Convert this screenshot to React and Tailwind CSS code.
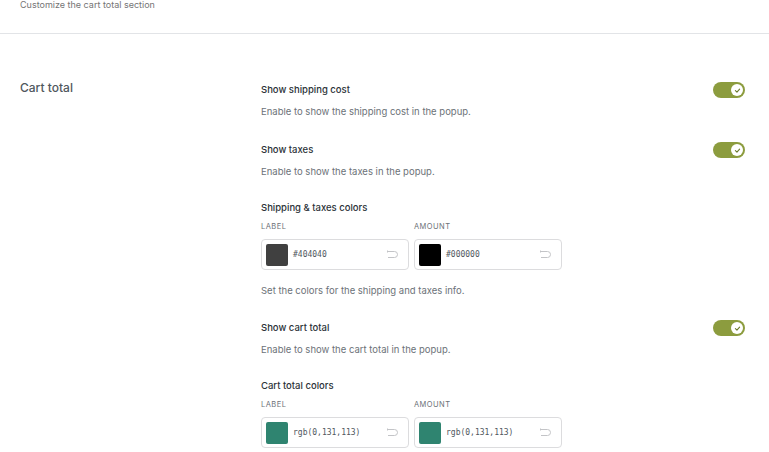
import React from "react";

function Toggle() {
  return (
    <div className="w-[32px] h-[16px] rounded-full bg-[#8c9c3e] flex items-center justify-end pr-[2px] shrink-0">
      <div className="w-[12px] h-[12px] rounded-full bg-white flex items-center justify-center">
        <svg width="7" height="7" viewBox="0 0 10 10" fill="none">
          <path d="M2 5.2 L4.2 7.2 L8 3" stroke="#6b7a2c" strokeWidth="1.6" strokeLinecap="round" strokeLinejoin="round" />
        </svg>
      </div>
    </div>
  );
}

function ColorInput({ color, value }) {
  return (
    <div className="w-[148px] h-[31px] border border-[#dcdcde] rounded-[4px] flex items-center pl-[4px] pr-[10px] bg-white">
      <div className="w-[22px] h-[22px] rounded-[2px] shrink-0" style={{ background: color }} />
      <span className="ml-[5px] text-[8px] text-[#50575e] font-['DejaVu_Sans_Mono',monospace] flex-1">{value}</span>
      <svg width="12" height="9" viewBox="0 0 12 9" fill="none">
        <path d="M1.5 1.5 H8.5 A2.5 2.5 0 0 1 8.5 7.5 H2" stroke="#c3c4c7" strokeWidth="1" />
        <path d="M1.5 0.5 V2.5" stroke="#c3c4c7" strokeWidth="1" />
      </svg>
    </div>
  );
}

function ToggleRow({ title, desc }) {
  return (
    <div className="flex justify-between items-start">
      <div>
        <div className="text-[9.5px] font-medium text-[#2c3338] leading-[14px]">{title}</div>
        <div className="text-[9.5px] text-[#6c7278] leading-[14px] mt-[8px]">{desc}</div>
      </div>
      <div className="mt-[-1px]">
        <Toggle />
      </div>
    </div>
  );
}

function ColorGroup({ title, label, amount }) {
  return (
    <div>
      <div className="text-[9.5px] font-medium text-[#2c3338] leading-[14px]">{title}</div>
      <div className="flex gap-[5px] mt-[7px]">
        <div>
          <div className="text-[7.5px] tracking-[0.06em] text-[#6c7278] leading-[10px] uppercase">Label</div>
          <div className="mt-[7px]">
            <ColorInput color={label[0]} value={label[1]} />
          </div>
        </div>
        <div>
          <div className="text-[7.5px] tracking-[0.06em] text-[#6c7278] leading-[10px] uppercase">Amount</div>
          <div className="mt-[7px]">
            <ColorInput color={amount[0]} value={amount[1]} />
          </div>
        </div>
      </div>
    </div>
  );
}

export default function App() {
  return (
    <div className="w-[769px] h-[452px] bg-white overflow-hidden font-['Inter',sans-serif]">
      <div className="px-[20px] pt-[0px] h-[34px] border-b border-[#e2e4e7]">
        <div className="text-[9px] text-[#757575] leading-[10px]">Customize the cart total section</div>
      </div>
      <div className="flex pl-[20px] pr-[24px] pt-[46px]">
        <div className="w-[241px] shrink-0">
          <div className="text-[12px] font-medium text-[#50575e] leading-[16px]">Cart total</div>
        </div>
        <div className="flex-1 mt-[3px]">
          <ToggleRow title="Show shipping cost" desc="Enable to show the shipping cost in the popup." />
          <div className="mt-[24px]">
            <ToggleRow title="Show taxes" desc="Enable to show the taxes in the popup." />
          </div>
          <div className="mt-[22px]">
            <ColorGroup title="Shipping & taxes colors" label={["#404040", "#404040"]} amount={["#000000", "#000000"]} />
          </div>
          <div className="text-[9.5px] text-[#6c7278] leading-[14px] mt-[14px]">Set the colors for the shipping and taxes info.</div>
          <div className="mt-[23px]">
            <ToggleRow title="Show cart total" desc="Enable to show the cart total in the popup." />
          </div>
          <div className="mt-[22px]">
            <ColorGroup title="Cart total colors" label={["#2f8470", "rgb(0,131,113)"]} amount={["#2f8470", "rgb(0,131,113)"]} />
          </div>
        </div>
      </div>
    </div>
  );
}
